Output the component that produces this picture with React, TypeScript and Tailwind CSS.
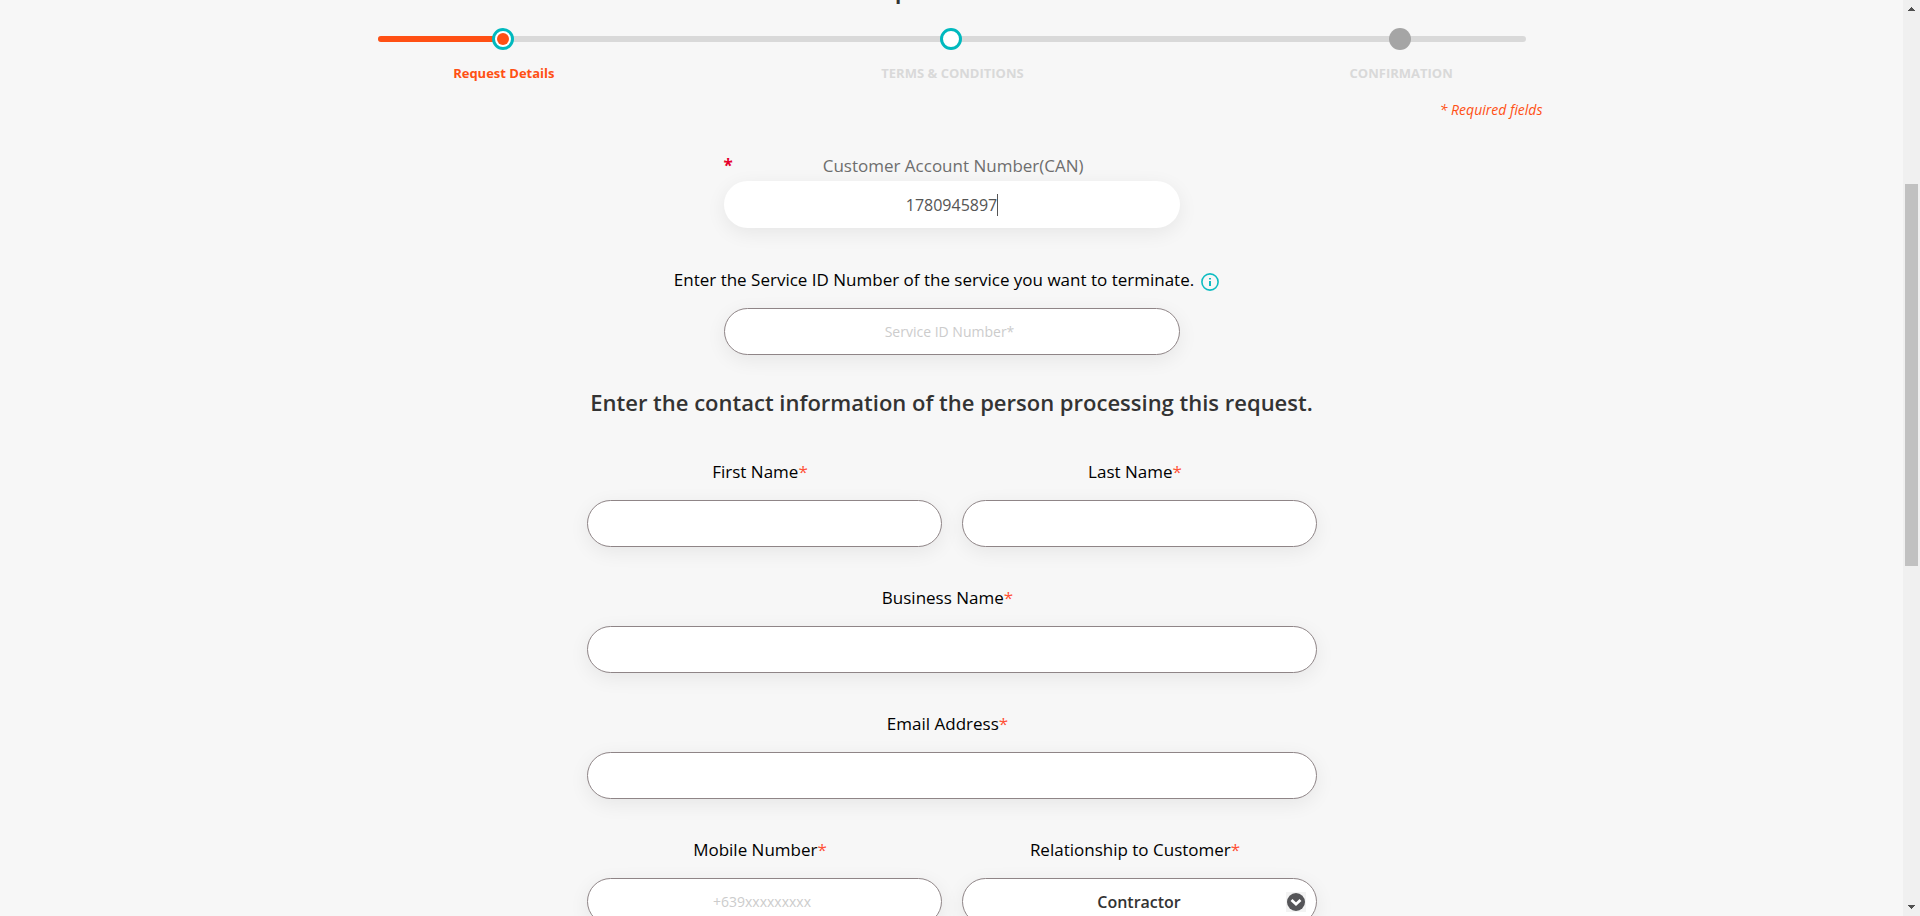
import { useState, type ReactNode } from 'react';

const inputBase =
  'block h-[47px] w-full rounded-[24px] bg-white px-6 text-center shadow-[0_5px_20px_rgba(0,0,0,0.07)] outline-none';
const inputBorder = 'border border-[#8f8587]';
const hintedInput = 'pr-7 pb-[2px] placeholder:text-sm placeholder:text-[#cccccc]';

function Field({ id, label, children }: { id: string; label: string; children: ReactNode }) {
  return (
    <div className="flex flex-col gap-4">
      <label htmlFor={id} className="pr-2 text-center leading-6 text-black">
        {label}
        <span className="text-[#ff5035]">*</span>
      </label>
      {children}
    </div>
  );
}

function TextField({ id, label, hint }: { id: string; label: string; hint?: string }) {
  return (
    <Field id={id} label={label}>
      <input id={id} type="text" placeholder={hint} className={`${inputBase} ${inputBorder} ${hintedInput} text-base text-[#555555]`} />
    </Field>
  );
}

function Stepper() {
  return (
    <nav aria-label="Progress" className="relative mx-auto w-full max-w-[1346px]">
      <div className="absolute inset-x-[99px] top-2 h-[6px] rounded-full bg-[#d9d9d9]">
        <div className="h-full w-[11%] rounded-full bg-[#ff5014]" />
      </div>
      <ol className="relative grid grid-cols-3 text-center text-[13px] leading-5 font-bold text-[#d9d9d9]">
        <li className="flex flex-col items-center gap-[13px] text-[#ff5014]">
          <span className="flex size-[22px] items-center justify-center rounded-full border-3 border-[#00b9be] bg-white">
            <span className="size-3 rounded-full bg-[#ff5014]" />
          </span>
          <span className="pl-[2px]">Request Details</span>
        </li>
        <li className="flex flex-col items-center gap-[13px]">
          <span className="size-[22px] rounded-full border-3 border-[#00b9be] bg-white" />
          <span className="pl-[2px]">TERMS &amp; CONDITIONS</span>
        </li>
        <li className="flex flex-col items-center gap-[13px]">
          <span className="size-[22px] rounded-full bg-[#a5a5a5]" />
          <span className="pl-[2px]">CONFIRMATION</span>
        </li>
      </ol>
    </nav>
  );
}

function Scrollbar() {
  return (
    <div className="flex w-[17px] shrink-0 flex-col items-center bg-[#f0f0f0]">
      <svg className="h-[17px] w-[17px] shrink-0" viewBox="0 0 17 17" shapeRendering="crispEdges">
        <path d="M5 11V10H6V9H7V8H8V7H9V8H10V9H11V10H12V11Z" fill="#505050" />
      </svg>
      <div className="flex w-full flex-1 flex-col items-center">
        <div className="h-[18.9%]" />
        <div className="h-[43.4%] w-[13px] bg-[#c1c1c1]" />
      </div>
      <svg className="h-[17px] w-[17px] shrink-0" viewBox="0 0 17 17" shapeRendering="crispEdges">
        <path d="M5 6V7H6V8H7V9H8V10H9V9H10V8H11V7H12V6Z" fill="#505050" />
      </svg>
    </div>
  );
}

export default function App() {
  const [can, setCan] = useState('1780945897');
  const [relationship, setRelationship] = useState('Contractor');

  return (
    <div className="flex h-screen overflow-hidden bg-[#f7f7f7] font-['Open_Sans','Noto_Sans',sans-serif] text-[17px]">
      <main className="min-w-0 flex-1 overflow-hidden">
        <header className="flex h-7 justify-center overflow-hidden">
          <h1 className="-mt-8 mr-[98px] text-[26px] leading-10 font-semibold text-[#333333]">p</h1>
        </header>

        <Stepper />

        <p className="mx-auto mt-[17px] w-full max-w-[1182px] text-right text-sm leading-5 text-[#ff5014] italic">
          * Required fields
        </p>

        <form className="mx-auto mt-[34px] w-full max-w-[730px]">
          <div className="mx-auto w-full max-w-[456px]">
            <label htmlFor="can" className="flex leading-6 text-[#6e6e6e]">
              <span className="font-bold text-[#e6002d]">*</span>
              <span className="flex-1 pr-[6px] text-center">Customer Account Number(CAN)</span>
            </label>
            <div className="relative mt-[3px]">
              <input
                id="can"
                type="text"
                value={can}
                onChange={(e) => setCan(e.target.value)}
                className={`${inputBase} text-base font-medium text-[#555555] caret-transparent`}
              />
              <span className="pointer-events-none absolute top-[13px] left-1/2 ml-[45px] h-[22px] w-px bg-[#555555]" />
            </div>
          </div>

          <div className="mt-[40px] flex items-center justify-center gap-[7px] pr-[10px] leading-6">
            <label htmlFor="service" className="text-black">
              Enter the Service ID Number of the service you want to terminate.
            </label>
            <button type="button" aria-label="Service ID help" className="pt-1">
              <svg className="size-[18px]" viewBox="0 0 18 18" fill="none">
                <circle cx="9" cy="9" r="8.1" stroke="#0fbcc2" strokeWidth="1.6" />
                <path d="M9 8V13" stroke="#0fbcc2" strokeWidth="2" />
                <path d="M9 5V6.6" stroke="#0fbcc2" strokeWidth="2" />
              </svg>
            </button>
          </div>
          <div className="mx-auto mt-4 w-full max-w-[456px]">
            <input
              id="service"
              type="text"
              placeholder="Service ID Number*"
              className={`${inputBase} ${inputBorder} ${hintedInput} text-base text-[#555555]`}
            />
          </div>

          <h2 className="mt-[31px] text-center text-[22px] leading-8 font-semibold whitespace-nowrap text-[#333333]">
            Enter the contact information of the person processing this request.
          </h2>

          <div className="mt-[42px] flex flex-col gap-[39px]">
            <div className="grid grid-cols-2 gap-5">
              <TextField id="first" label="First Name" />
              <TextField id="last" label="Last Name" />
            </div>
            <TextField id="business" label="Business Name" />
            <TextField id="email" label="Email Address" />
            <div className="grid grid-cols-2 gap-5">
              <TextField id="mobile" label="Mobile Number" hint="+639xxxxxxxxx" />
              <Field id="relationship" label="Relationship to Customer">
                <div className="relative">
                  <select
                    id="relationship"
                    value={relationship}
                    onChange={(e) => setRelationship(e.target.value)}
                    className={`${inputBase} ${inputBorder} appearance-none text-base font-semibold text-[#333333] [text-align-last:center]`}
                  >
                    <option>Contractor</option>
                  </select>
                  <svg className="pointer-events-none absolute top-[14px] right-[11px] size-5" viewBox="0 0 20 20" fill="none">
                    <rect width="20" height="20" fill="#f3f3f3" />
                    <circle cx="10" cy="10" r="9" fill="#555558" />
                    <path d="M5.5 8L10 12.2L14.5 8" stroke="#ffffff" strokeWidth="2.8" />
                  </svg>
                </div>
              </Field>
            </div>
          </div>
        </form>
      </main>
      <Scrollbar />
    </div>
  );
}
